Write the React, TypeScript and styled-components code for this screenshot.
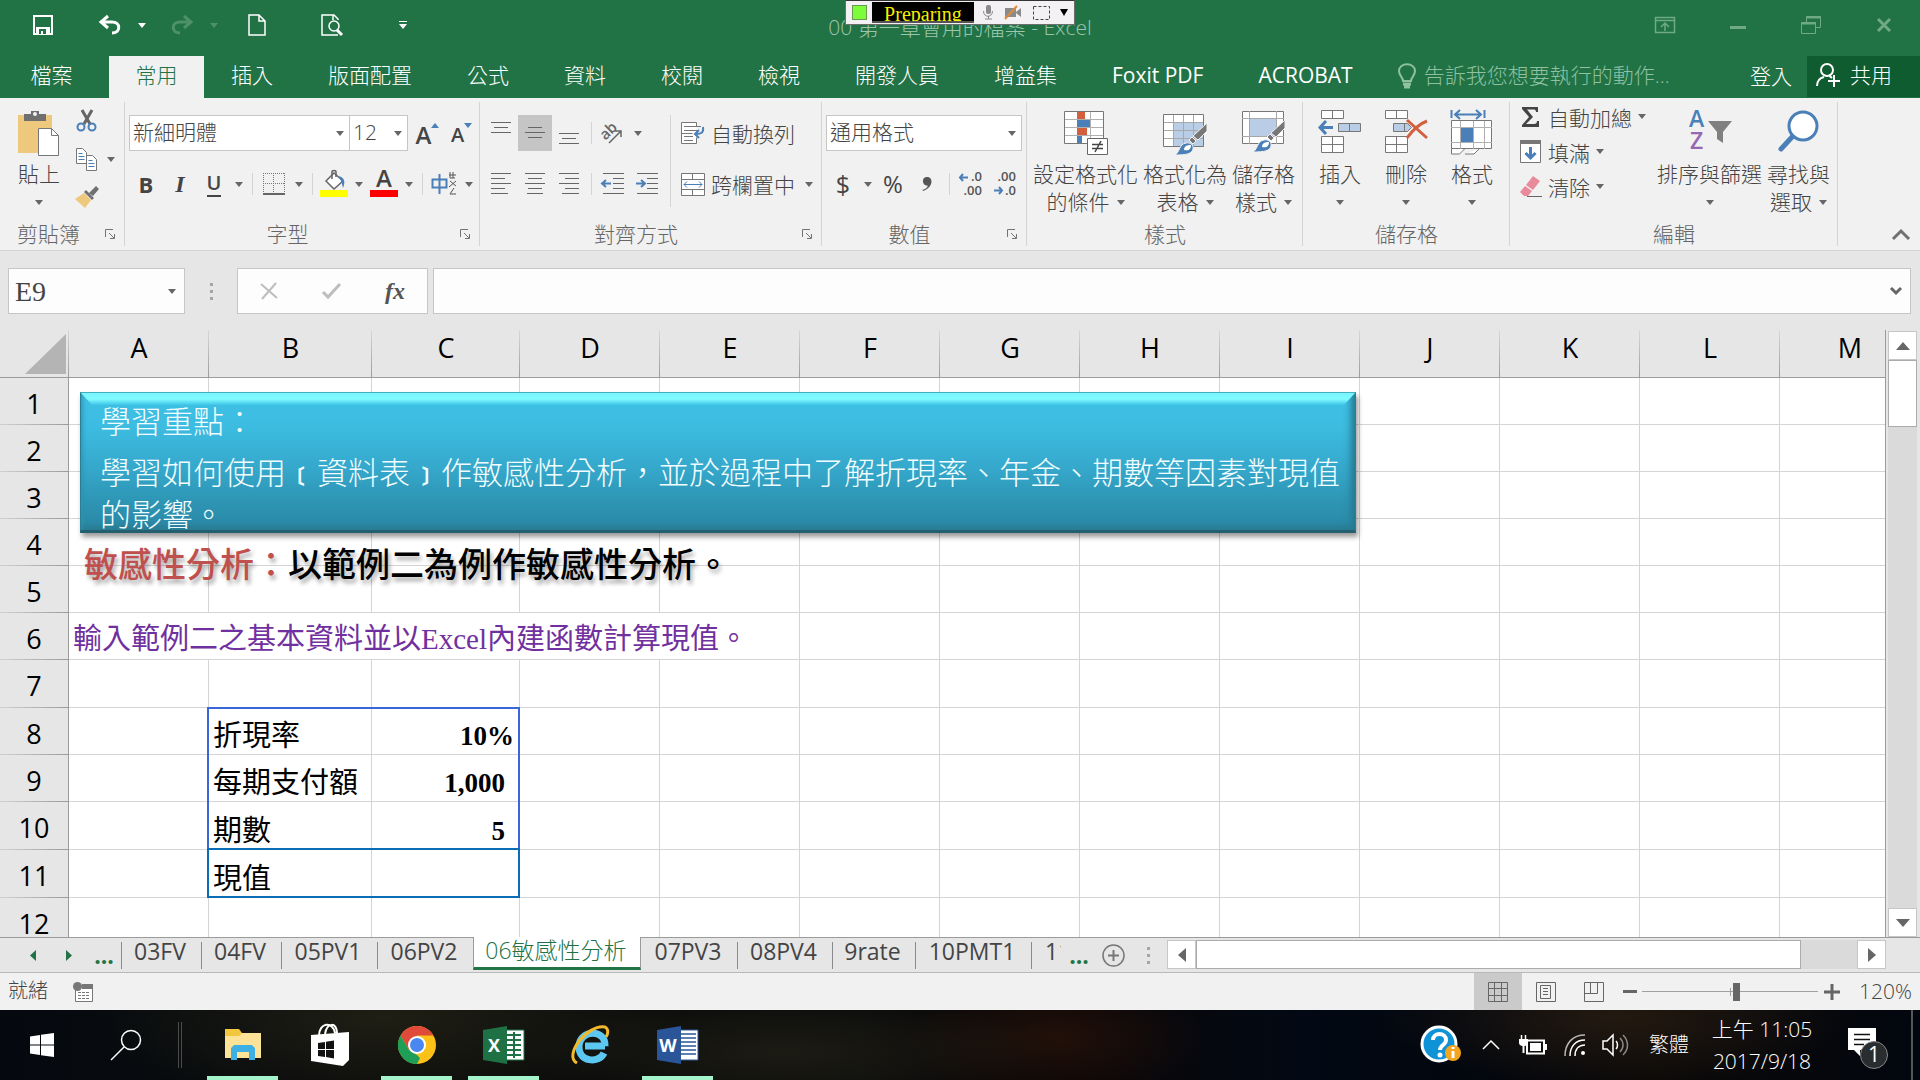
import React from "react";
import styled, { createGlobalStyle, css } from "styled-components";

const UI = `"Open Sans", "Noto Sans CJK TC", sans-serif`;
const SERIF = `"Liberation Serif", "Noto Sans CJK TC", serif`;

const c = {
  green: "#217346",
  greenDark: "#0e5c2f",
  greenSoft: "#9dc5ab",
  ribbon: "#f1f1f1",
  chrome: "#e6e6e6",
  line: "#d4d4d4",
  field: "#c6c6c6",
  text: "#444444",
  muted: "#666666",
  icon: "#737373",
  blue: "#4a7fb8",
  head: "#9b9b9b",
};

const Global = createGlobalStyle`
  * { box-sizing: border-box; }
  body { margin: 0; background: ${c.chrome}; font-family: ${UI}; font-weight: 300; }
  button, input, select { font: inherit; color: inherit; margin: 0; }
  button { border: 0; padding: 0; background: none; cursor: pointer; }
  svg { display: block; flex: none; overflow: visible; }
`;

const Shell = styled.div`
  display: flex;
  flex-direction: column;
  height: 100vh;
  overflow: hidden;
  color: ${c.text};
`;

/* ---------- shared ---------- */

const Tool = styled.button<{ $w?: number; $on?: boolean }>`
  display: flex;
  align-items: center;
  justify-content: center;
  flex: none;
  width: ${(p) => p.$w ?? 34}px;
  height: 36px;
  background: ${(p) => (p.$on ? "#c5c5c5" : "transparent")};
`;

const CaretSvg = ({ color = c.muted }: { color?: string }) => (
  <svg width="8" height="5" viewBox="0 0 8 5" aria-hidden="true">
    <path d="M0 0h8L4 5z" fill={color} />
  </svg>
);

const CaretButton = ({ label, color }: { label: string; color?: string }) => (
  <Tool $w={16} aria-label={label}>
    <CaretSvg color={color} />
  </Tool>
);

/* ---------- title bar ---------- */

const TitleBar = styled.header`
  display: grid;
  grid-template-columns: 1fr auto 1fr;
  height: 56px;
  flex: none;
  background: ${c.green};
  color: #fff;
`;

const Quick = styled.div`
  display: flex;
  align-items: center;
  height: 50px;
`;

const QuickPair = styled.div`
  display: flex;
  padding-right: 8px;
`;

const DocTitle = styled.h1`
  margin: 0;
  font-size: 21px;
  line-height: 54px;
  font-weight: 300;
  color: ${c.greenSoft};
  white-space: nowrap;
`;

const WindowButtons = styled.div`
  display: flex;
  justify-content: flex-end;
  align-items: center;
  height: 50px;
`;

const Recorder = styled.div`
  position: absolute;
  top: 0;
  left: 50%;
  margin-left: -115px;
  display: flex;
  align-items: center;
  width: 230px;
  height: 25px;
  padding: 0 6px;
  background: #f3f1f3;
  border: 1px solid #6d6d6d;
  border-top-color: #333;
`;

const RecLamp = styled.span`
  width: 15px;
  height: 15px;
  background: #7dfc3a;
  border: 1px solid #6a9a50;
`;

const RecState = styled.span`
  width: 102px;
  height: 21px;
  margin: 0 8px 0 5px;
  overflow: hidden;
  background: #000;
  border-bottom: 2px solid #555;
  color: #f4f000;
  font-family: ${SERIF};
  font-size: 20px;
  line-height: 24px;
  text-align: center;
`;

const RecTools = styled.span`
  display: flex;
  flex: 1;
  align-items: center;
  justify-content: space-between;
`;

/* ---------- ribbon tabs ---------- */

const TabRow = styled.nav`
  display: flex;
  height: 42px;
  flex: none;
  background: ${c.green};
  color: #fff;
  font-size: 21px;
  line-height: 36px;
`;

const RibbonTab = styled.button<{ $active?: boolean; $file?: boolean; $latin?: boolean }>`
  flex: none;
  padding: 0 28px 5px 27px;
  height: 42px;
  white-space: nowrap;
  font-weight: ${(p) => (p.$latin ? 400 : 300)};
  ${(p) => p.$file && css`width: 109px; padding: 0 26px 5px 20px;`}
  ${(p) => p.$active && css`
    width: 95px;
    padding: 0 0 5px;
    background: ${c.ribbon};
    color: ${c.green};
  `}
`;

const TellMe = styled.label`
  display: flex;
  align-items: flex-start;
  gap: 8px;
  flex: 1;
  min-width: 0;
  padding-left: 17px;
  color: #8fc0a0;
  & > svg { margin-top: 7px; }
`;

const TellMeInput = styled.input`
  width: 260px;
  height: 38px;
  padding: 0;
  border: 0;
  outline: 0;
  background: transparent;
  &::placeholder { color: #8fc0a0; opacity: 1; }
`;

const SignIn = styled.button`
  flex: none;
  width: 72px;
  height: 40px;
`;

const Share = styled.button`
  display: flex;
  align-items: center;
  gap: 10px;
  flex: none;
  width: 113px;
  height: 41px;
  padding: 0 9px 4px;
  background: ${c.greenDark};
`;

/* ---------- ribbon ---------- */

const Ribbon = styled.section`
  display: flex;
  flex: none;
  height: 153px;
  background: ${c.ribbon};
  border-bottom: 1px solid ${c.line};
  font-size: 21px;
`;

const Group = styled.div<{ $w: number }>`
  display: flex;
  flex-direction: column;
  flex: none;
  width: ${(p) => p.$w}px;
  background: linear-gradient(${c.line}, ${c.line}) right 0 top 4px / 1px 144px no-repeat;
`;

const GroupBody = styled.div<{ $pad: string; $gap?: number }>`
  display: flex;
  gap: ${(p) => p.$gap ?? 0}px;
  padding: ${(p) => p.$pad};
  height: 122px;
`;

const GroupFoot = styled.div<{ $lead?: boolean }>`
  display: flex;
  align-items: center;
  height: 28px;
  padding-left: ${(p) => (p.$lead ? 17 : 0)}px;
  color: ${c.muted};
  line-height: 28px;
  text-align: ${(p) => (p.$lead ? "left" : "center")};
`;

const FootName = styled.span`
  flex: 1;
  white-space: nowrap;
`;

const LauncherButton = styled.button`
  margin: 0 10px;
`;

const Rows = styled.div`
  display: flex;
  flex-direction: column;
  gap: 15px;
`;

const ToolRow = styled.div`
  display: flex;
  align-items: center;
  height: 36px;
`;

const ToolStack = styled.div`
  display: flex;
  flex-direction: column;
  padding-top: 4px;
  & > * { height: 38px; }
`;

const Divider = styled.span`
  width: 10px;
  height: 22px;
  background: linear-gradient(${c.line}, ${c.line}) center / 1px 100% no-repeat;
`;

const TallDivider = styled.span`
  width: 1px;
  height: 92px;
  margin: 0 10px 0 6px;
  background: ${c.line};
`;

const Combo = styled.span<{ $w: number }>`
  display: grid;
  grid-template-columns: 1fr;
  align-items: center;
  width: ${(p) => p.$w}px;
  height: 36px;
  background: #fff;
  border: 1px solid ${c.field};
  & > * { grid-area: 1 / 1; }
  & > svg { justify-self: end; margin-right: 5px; pointer-events: none; }
  & + & { margin-left: -1px; }
`;

const Select = styled.select`
  appearance: none;
  width: 100%;
  height: 34px;
  padding: 0 20px 2px 3px;
  border: 0;
  outline: 0;
  background: transparent;
  line-height: 30px;
`;

const Glyph = styled.span<{ $size?: number; $weight?: number; $italic?: boolean; $line?: boolean; $serif?: boolean }>`
  font-family: ${(p) => (p.$serif ? SERIF : UI)};
  font-size: ${(p) => p.$size ?? 22}px;
  font-weight: ${(p) => p.$weight ?? 400};
  font-style: ${(p) => (p.$italic ? "italic" : "normal")};
  line-height: 24px;
  border-bottom: ${(p) => (p.$line ? "2px solid #444" : "0")};
`;

const SizeTool = styled.button`
  display: flex;
  align-items: flex-start;
  justify-content: center;
  width: 34px;
  height: 36px;
  padding: 8px 0 0 5px;
`;

const InkTool = styled.button<{ $ink: string }>`
  display: flex;
  flex-direction: column;
  align-items: center;
  justify-content: flex-end;
  width: 34px;
  height: 36px;
  padding-bottom: 5px;
  &::after {
    content: "";
    width: 28px;
    height: 7px;
    background: ${(p) => p.$ink};
  }
`;

const Wide = styled.button`
  display: flex;
  align-items: center;
  gap: 6px;
  height: 36px;
  white-space: nowrap;
  & > svg:last-child:not(:first-child) { margin-left: 4px; }
`;

const Big = styled.button`
  display: flex;
  flex-direction: column;
  align-items: center;
  flex: none;
  min-width: 44px;
  line-height: 28px;
  white-space: nowrap;
`;

const BigIcon = styled.span`
  display: flex;
  height: 50px;
`;

const BigLine = styled.span`
  display: flex;
  align-items: center;
  justify-content: center;
  gap: 7px;
  height: 28px;
`;

const EditList = styled.div`
  display: flex;
  flex-direction: column;
  width: 137px;
  padding-top: 2px;
`;

const EditItem = styled.button`
  display: flex;
  align-items: center;
  height: 35px;
  gap: 6px;
  padding-bottom: 2px;
  white-space: nowrap;
`;

const Collapse = styled.button`
  display: flex;
  flex: 1;
  align-items: flex-end;
  justify-content: flex-end;
  padding: 0 10px 10px 0;
`;

const BigButton = ({ icon, a, b }: { icon: React.ReactNode; a: string; b?: string }) => (
  <Big>
    <BigIcon>{icon}</BigIcon>
    <BigLine>{a}</BigLine>
    <BigLine>
      {b}
      <CaretSvg />
    </BigLine>
  </Big>
);

const Launcher = ({ label }: { label: string }) => (
  <LauncherButton aria-label={label}>
    <svg width="10" height="10" viewBox="0 0 10 10" fill="none" stroke={c.icon}>
      <path d="M.5 8V.5H8M4 4l5 5M9.500 5v4.500H5" />
    </svg>
  </LauncherButton>
);

/* ---------- formula bar ---------- */

const FormulaBar = styled.section`
  display: flex;
  flex: none;
  height: 79px;
  padding: 17px 9px 16px 8px;
  background: ${c.chrome};
`;

const Field = styled.div<{ $w?: number }>`
  display: flex;
  align-items: center;
  flex: ${(p) => (p.$w ? "none" : "1")};
  width: ${(p) => (p.$w ? `${p.$w}px` : "auto")};
  height: 46px;
  padding-right: 8px;
  background: #fdfdfd;
  border: 1px solid ${c.field};
`;

const NameInput = styled.input`
  flex: 1;
  min-width: 0;
  height: 44px;
  padding: 2px 0 0 6px;
  border: 0;
  outline: 0;
  background: transparent;
  font-family: ${SERIF};
  font-size: 28px;
`;

const Dots = styled.span<{ $w: number; $h: number }>`
  display: flex;
  flex-direction: column;
  align-items: center;
  justify-content: center;
  gap: 4px;
  width: ${(p) => p.$w}px;
  height: ${(p) => p.$h}px;
  & > i { width: 3px; height: 3px; background: #a5a5a5; }
`;

const FxButtons = styled.div`
  display: flex;
  align-items: center;
  width: 191px;
  height: 46px;
  margin-right: 5px;
  background: #fdfdfd;
  border: 1px solid ${c.field};
`;

const FxGlyph = styled.span`
  font-family: ${SERIF};
  font-style: italic;
  font-weight: 700;
  font-size: 24px;
  color: #555;
`;

/* ---------- sheet ---------- */

const SheetArea = styled.main`
  display: flex;
  flex: 1;
  min-height: 0;
`;

const Viewport = styled.div`
  position: relative;
  flex: 1;
  min-width: 0;
  overflow: hidden;
  background: #fff;
  border-right: 1px solid ${c.head};
`;

const Grid = styled.table`
  table-layout: fixed;
  width: 1920px;
  border-collapse: separate;
  border-spacing: 0;
`;

const headLine = `linear-gradient(to bottom, #d8d8d8, ${c.head})`;

const Corner = styled.th`
  height: 48px;
  padding: 0 3px 3px 0;
  vertical-align: bottom;
  background: ${headLine} right / 1px 100% no-repeat ${c.chrome};
  border-bottom: 1px solid ${c.head};
  & > svg { margin-left: auto; }
`;

const ColHead = styled.th`
  height: 48px;
  padding: 0 0 11px;
  font-size: 27px;
  line-height: 36px;
  font-weight: 400;
  color: #000;
  background: ${headLine} right / 1px 100% no-repeat ${c.chrome};
  border-bottom: 1px solid ${c.head};
`;

const RowHead = styled.th<{ $h: number }>`
  height: ${(p) => p.$h}px;
  padding: 4px 0 0;
  font-size: 27px;
  line-height: 36px;
  font-weight: 400;
  color: #000;
  background: linear-gradient(to right, #d0d0d0, ${c.head}) bottom / 100% 1px no-repeat ${c.chrome};
  border-right: 1px solid ${c.head};
`;

const Cell = styled.td<{ $kind?: "note" | "label" | "percent" | "number" }>`
  padding: 0 0 0 4px;
  border-right: 1px solid ${c.line};
  border-bottom: 1px solid ${c.line};
  font-family: ${SERIF};
  font-size: 29px;
  line-height: 36px;
  font-weight: 400;
  color: #000;
  white-space: nowrap;
  vertical-align: bottom;
  ${(p) => p.$kind === "note" && css`color: #7030a0; padding-bottom: 2px;`}
  ${(p) => (p.$kind === "percent" || p.$kind === "number") && css`
    font-size: 27px;
    font-weight: 700;
    text-align: right;
    padding-right: ${p.$kind === "percent" ? 5 : 14}px;
  `}
`;

const CellFrame = styled.div<{ $top: number; $h: number; $color: string }>`
  position: absolute;
  left: 207px;
  top: ${(p) => p.$top}px;
  width: 313px;
  height: ${(p) => p.$h}px;
  border: 2px solid ${(p) => p.$color};
  pointer-events: none;
`;

const Banner = styled.div`
  position: absolute;
  left: 80px;
  top: 62px;
  width: 1276px;
  height: 141px;
  padding: 9px 0 0 19px;
  color: #f2fdff;
  font-family: ${SERIF};
  font-size: 31px;
  line-height: 42px;
  font-weight: 300;
  white-space: nowrap;
  background: linear-gradient(#3ec1e5 0, #3cbce0 25%, #35a8cb 55%, #2d93b2 82%, #2b88a6 100%);
  border: 1px solid #2a7f97;
  border-top-color: #45aebf;
  border-bottom: 3px solid #245f70;
  box-shadow: 2px 4px 5px rgba(0, 0, 0, 0.4), inset -8px 0 7px -4px #26798f, inset 4px 0 5px -3px #2f93b0,
    inset 0 -8px 7px -4px #2b7b91;
  &::before {
    content: "";
    position: absolute;
    inset: 0 0 auto;
    height: 12px;
    background: linear-gradient(#78f4ff 0, #80fbff 50%, #3ec4e8 100%);
    clip-path: polygon(0 0, 100% 0, calc(100% - 11px) 100%, 11px 100%);
  }
`;

const BannerLine = styled.p<{ $first?: boolean }>`
  position: relative;
  margin: 0 0 ${(p) => (p.$first ? 9 : 0)}px;
  & > b { font-weight: 700; }
`;

const Caption = styled.p`
  position: absolute;
  left: 84px;
  top: 213px;
  margin: 0;
  font-family: ${SERIF};
  font-size: 34px;
  line-height: 46px;
  font-weight: 500;
  color: #000;
  white-space: nowrap;
  text-shadow: 2px 4px 4px rgba(0, 0, 0, 0.35);
  & > em { font-style: normal; color: #c0504d; }
`;

const VScroll = styled.div`
  display: flex;
  flex-direction: column;
  width: 34px;
  padding: 1px 3px 0 2px;
  background: ${c.chrome};
`;

const ScrollButton = styled.button`
  display: flex;
  align-items: center;
  justify-content: center;
  flex: none;
  width: 29px;
  height: 29px;
  background: #fff;
  border: 1px solid ${c.field};
`;

const VTrack = styled.div`
  flex: 1;
  width: 29px;
  background: #dadada;
`;

const VThumb = styled.div`
  height: 67px;
  background: #fff;
  border: 1px solid #ababab;
`;

/* ---------- sheet tabs ---------- */

const SheetTabs = styled.nav`
  display: flex;
  flex: none;
  height: 35px;
  padding-left: 15px;
  background: ${c.chrome};
  border-top: 1px solid ${c.head};
  font-size: 23px;
`;

const TabNav = styled.button<{ $w: number }>`
  display: flex;
  align-items: center;
  justify-content: center;
  flex: none;
  width: ${(p) => p.$w}px;
  height: 34px;
  color: ${c.green};
  font-weight: 700;
`;

const SheetTab = styled.button<{ $w: number; $active?: boolean; $cut?: boolean }>`
  flex: none;
  width: ${(p) => p.$w}px;
  height: 32px;
  padding: 0 2px 6px 0;
  overflow: hidden;
  line-height: 26px;
  white-space: nowrap;
  font-weight: 400;
  background: linear-gradient(#8a8a8a, #8a8a8a) 0 4px / 1px 27px no-repeat;
  ${(p) => p.$cut && css`padding-left: 14px; text-align: left;`}
  ${(p) => p.$active && css`
    margin-top: -1px;
    height: 33px;
    padding-bottom: 4px;
    font-weight: 300;
    color: ${c.green};
    background: #fff;
    border: 1px solid ${c.head};
    border-top: 0;
    border-bottom: 3px solid ${c.green};
    & + button { background: none; }
  `}
`;

const HScroll = styled.div`
  display: flex;
  flex: 1;
  height: 29px;
  margin: 2px 34px 0 0;
  background: #dadada;
`;

const HThumb = styled.div`
  flex: 606;
  background: #fff;
  border: 1px solid #ababab;
`;

const HGap = styled.div`
  flex: 56;
`;

/* ---------- status bar ---------- */

const StatusBar = styled.footer`
  display: flex;
  align-items: center;
  flex: none;
  height: 38px;
  padding: 0 8px;
  background: ${c.ribbon};
  border-top: 1px solid #b9b9b9;
  font-size: 20px;
`;

const StatusText = styled.span`
  width: 65px;
  line-height: 34px;
  height: 36px;
`;

const StatusSpace = styled.span`
  flex: 1;
`;

const ViewButton = styled.button<{ $on?: boolean }>`
  display: flex;
  align-items: center;
  justify-content: center;
  width: 48px;
  height: 37px;
  background: ${(p) => (p.$on ? "#cacaca" : "none")};
`;

const ZoomButton = styled.button<{ $w: number }>`
  display: flex;
  align-items: center;
  justify-content: center;
  width: ${(p) => p.$w}px;
  height: 37px;
`;

const ZoomRange = styled.input`
  appearance: none;
  width: 176px;
  height: 18px;
  outline: 0;
  background: linear-gradient(#a0a0a0, #a0a0a0) center / 100% 1px no-repeat,
    linear-gradient(#a0a0a0, #a0a0a0) center / 1px 8px no-repeat;
  &::-webkit-slider-thumb {
    appearance: none;
    width: 7px;
    height: 18px;
    background: #666;
  }
`;

const ZoomValue = styled.button`
  width: 66px;
  height: 36px;
  padding-bottom: 2px;
  font-size: 21px;
  text-align: right;
  white-space: nowrap;
`;

/* ---------- taskbar ---------- */

const Taskbar = styled.footer`
  display: flex;
  flex: none;
  height: 70px;
  color: #fff;
  background: radial-gradient(ellipse 300px 90px at 20% 10%, rgba(60, 58, 34, 0.4), transparent),
    radial-gradient(ellipse 260px 60px at 41% 60%, rgba(50, 46, 28, 0.45), transparent),
    radial-gradient(ellipse 150px 60px at 55% 40%, rgba(56, 26, 12, 0.5), transparent),
    radial-gradient(ellipse 240px 70px at 84% 10%, rgba(60, 42, 24, 0.5), transparent),
    linear-gradient(90deg, #05090f 0, #0b0c0b 20%, #0a0b0c 45%, #0b0606 56%, #020914 68%, #02060e 76%, #0b0908 86%, #02060e 100%);
`;

const TaskButton = styled.button`
  display: flex;
  align-items: center;
  justify-content: center;
  flex: none;
  width: 84px;
  height: 70px;
`;

const TaskDivider = styled.span`
  width: 4px;
  height: 46px;
  margin: 12px 17px 0 10px;
  border: 1px solid #4b4b4b;
  border-width: 0 1px;
`;

const AppButton = styled.button<{ $open?: boolean }>`
  display: flex;
  align-items: center;
  justify-content: center;
  flex: none;
  width: 71px;
  height: 70px;
  margin: 0 8px;
  border-top: 4px solid transparent;
  border-bottom: 4px solid ${(p) => (p.$open ? "#a3f3cb" : "transparent")};
`;

const Tray = styled.div`
  display: flex;
  align-items: center;
  margin-left: auto;
`;

const TrayItem = styled.button<{ $w: number }>`
  display: flex;
  align-items: center;
  justify-content: center;
  flex: none;
  width: ${(p) => p.$w}px;
  height: 70px;
  font-size: 20px;
  line-height: 32px;
  white-space: nowrap;
`;

const Clock = styled(TrayItem)`
  flex-direction: column;
  font-size: 21px;
`;

const Notice = styled(TrayItem)`
  padding: 6px 0 0 4px;
`;

const ShowDesktop = styled.button`
  width: 9px;
  height: 70px;
  border-left: 2px solid #555;
`;

/* ---------- icons ---------- */

const g = "#777777";

const Lines = ({ rows, y = 0 }: { rows: [number, number][]; y?: number }) => (
  <svg width="20" height="22" viewBox="0 0 20 22" stroke="#666">
    {rows.map(([x1, x2], i) => (
      <path key={i} d={`M${x1} ${y + i * 5 + 0.5}H${x2}`} />
    ))}
  </svg>
);

const PasteIcon = () => (
  <svg width="42" height="46" viewBox="0 0 42 46">
    <path d="M0 5h34v38H0z" fill="#eec87c" />
    <path d="M6 4h7V1h8v3h7v7H6z" fill="#6f6f6f" />
    <circle cx="17" cy="4" r="2" fill="#f1f1f1" />
    <path d="M20.500 18.500h13l7 7v20h-20z" fill="#fff" stroke={g} />
    <path d="M33.500 18.500v7h7" fill="none" stroke={g} />
  </svg>
);

const ScissorsIcon = () => (
  <svg width="22" height="24" viewBox="0 0 22 24" fill="none">
    <path d="M6 1l8 14M16 1L8 15" stroke="#666" strokeWidth="3" />
    <circle cx="5" cy="18" r="3.500" stroke={c.blue} strokeWidth="2" />
    <circle cx="16" cy="18" r="3.500" stroke={c.blue} strokeWidth="2" />
  </svg>
);

const CopyIcon = () => (
  <svg width="22" height="23" viewBox="0 0 22 23" fill="#fff" stroke={g}>
    <path d="M.5.5h6l4 4v11H.5z" />
    <path d="M2.500 5.500h4M2.500 8.500h6M2.500 11.500h6" stroke={c.blue} />
    <path d="M10.500 7.500h6l4 4v11h-10z" />
    <path d="M12.500 12.500h4M12.500 15.500h6M12.500 18.500h6" stroke={c.blue} />
  </svg>
);

const BrushIcon = () => (
  <svg width="24" height="22" viewBox="0 0 24 22">
    <path d="M0 13l9-6 7 7-6 8z" fill="#eec87c" />
    <path d="M9 6l2-2 8 8-2 2zM14 7l7-7 3 3-6 7z" fill="#707070" />
  </svg>
);

const GrowMark = ({ down }: { down?: boolean }) => (
  <svg width="8" height="5" viewBox="0 0 8 5">
    <path d={down ? "M0 0h8L4 5z" : "M0 5h8L4 0z"} fill={c.blue} />
  </svg>
);

const BorderIcon = () => (
  <svg width="22" height="22" viewBox="0 0 22 22" stroke="#777" fill="none">
    <path d="M0 .5h22M0 10.500h22M.5 0v20M10.500 0v20M21.500 0v20" strokeDasharray="1 1" />
    <path d="M0 21h22" strokeWidth="2" stroke="#666" />
  </svg>
);

const BucketIcon = () => (
  <svg width="26" height="20" viewBox="0 0 26 20">
    <path d="M13 3l9 8-9 8-8-8z" fill="#fff" stroke="#666" strokeWidth="1.500" />
    <path d="M11 9V2c0-2 4-2 4 0v5" fill="none" stroke="#666" strokeWidth="1.500" />
    <path d="M17 6c6 1 8 5 5 12-1-4-1-7-5-12z" fill={c.blue} />
  </svg>
);

const PhoneticIcon = () => (
  <svg width="26" height="24" viewBox="0 0 26 24" fill="none">
    <path d="M1.500 7.500h14v8h-14zM8.500 2v20" stroke={c.blue} strokeWidth="2" />
    <path d="M19 0v6h5M22 0v6M18 3h7M19 9l6 5M25 9l-7 6M23 16l-4 6h6" stroke="#555" />
  </svg>
);

const AngleIcon = () => (
  <svg width="24" height="24" viewBox="0 0 24 24">
    <text x="0" y="15" fontFamily="Open Sans" fontSize="15" fontWeight="600" fill="#666" transform="rotate(-45 8 12)">
      ab
    </text>
    <path d="M8 22L20 10M20 16v-6h-6" stroke="#666" strokeWidth="1.500" fill="none" />
  </svg>
);

const WrapIcon = () => (
  <svg width="24" height="23" viewBox="0 0 24 23" fill="none" stroke={g}>
    <path d="M15.500 5V.5H.5v21h15v-6M.5 11.500h11" fill="#fff" />
    <path d="M3 4.500h17M3 8.500h14M3 14.500h9M3 18.500h9" />
    <path d="M22 5c1 6-2 7-7 7M18 8l-4 4 4 4" stroke={c.blue} strokeWidth="2" />
  </svg>
);

const MergeIcon = () => (
  <svg width="24" height="23" viewBox="0 0 24 23" fill="#fff" stroke={g}>
    <path d="M.5.5h23v22H.5zM.5 6.500h23M.5 16.500h23M11.500.5v6M11.500 16.500v6" />
    <path d="M3 11.500h18M6 8.500l-3 3 3 3M18 8.500l3 3-3 3" stroke={c.blue} fill="none" />
  </svg>
);

const IndentIcon = ({ right }: { right?: boolean }) => (
  <svg width="22" height="22" viewBox="0 0 22 22" fill="none">
    <path d="M1 .5h21M11 5.500h11M11 10.500h11M11 15.500h11M1 20.500h21" stroke="#666" />
    <path d={right ? "M0 10.500h8M5 7l4 3.500L5 14" : "M9 10.500H1M4 7l-4 3.500L4 14"} stroke={c.blue} strokeWidth="2" />
  </svg>
);

const DecimalIcon = ({ more }: { more?: boolean }) => (
  <svg width="24" height="24" viewBox="0 0 24 24" fontFamily="Open Sans" fontSize="13" fontWeight="600" fill="#555">
    <text x="23" y="9" textAnchor="end">{more ? ".0" : ".00"}</text>
    <text x="23" y="23" textAnchor="end">{more ? ".00" : ".0"}</text>
    <path
      d={more ? "M9 5.500H1M4 2L1 5.500 4 9" : "M1 18.500h8M6 15l3 3.500L6 22"}
      stroke={c.blue}
      strokeWidth="2"
      fill="none"
    />
  </svg>
);

const ConditionIcon = () => (
  <svg width="44" height="46" viewBox="0 0 44 46">
    <path d="M.5 1.500h39v32H.5z" fill="#fff" />
    <path d="M13.500 1v32M26.500 1v32M0 9.500h40M0 17.500h40M0 25.500h40" stroke="#b0b0b0" />
    <path d="M.5 1.500h39v32H.5z" fill="none" stroke={g} />
    <path d="M13 2h8v7h-8zM13 18h10v7H13z" fill="#d35f3d" />
    <path d="M13 10h13v7H13zM13 26h5v7h-5z" fill={c.blue} />
    <path d="M23.500 28.500h20v16h-20z" fill="#fff" stroke="#666" />
    <path d="M28 34.500h11M28 38.500h11M37 31l-6 11" stroke="#444" strokeWidth="1.500" />
  </svg>
);

const PaintBrush = ({ x, y }: { x: number; y: number }) => (
  <g transform={`translate(${x} ${y})`}>
    <path d="M32 0v8l-9 9-5-4zM21 18l-3 3-4-4 3-3z" fill="#777" stroke="#f1f1f1" />
    <path d="M0 32c5-3 4-11 11-12 4-1 8 2 7 6-1 5-7 6-18 6z" fill={c.blue} stroke="#f1f1f1" />
    <path d="M9 27c0-4 3-5 7-5 0 4-2 6-7 5z" fill="#fff" />
  </g>
);

const TableStyleIcon = () => (
  <svg width="44" height="46" viewBox="0 0 44 46">
    <path d="M.5 4.500h40v32H.5z" fill="#fff" />
    <path d="M10 13h31v24H10z" fill="#b9cee6" />
    <path d="M10.500 4v32M20.500 4v32M30.500 4v32M0 12.500h40M0 20.500h40M0 28.500h40" stroke="#a8a8a8" />
    <path d="M.5 4.500h40v32H.5z" fill="none" stroke={g} />
    <PaintBrush x={12} y={13} />
  </svg>
);

const CellStyleIcon = () => (
  <svg width="44" height="46" viewBox="0 0 44 46">
    <path d="M.5 1.500h41v32H.5z" fill="#fff" stroke={g} />
    <path d="M7.500 1v33M34.500 1v33M0 8.500h42M0 26.500h42" stroke="#a8a8a8" />
    <path d="M8 9h26v17H8z" fill="#b9cee6" />
    <PaintBrush x={11} y={10} />
  </svg>
);

const InsertIcon = () => (
  <svg width="44" height="46" viewBox="0 0 44 46" fill="#fff" stroke={g}>
    <path d="M3.500.5h22v8h-22zM14.500.5v8M3.500 26.500h22v16h-22zM14.500 26.500v16M3.500 34.500h22" />
    <path d="M20.500 13.500h22v8h-22zM31.500 13.500v8" fill="#b9cee6" />
    <path d="M15 17.500H2M8 11l-6 6.500L8 24" fill="none" stroke={c.blue} strokeWidth="3" />
  </svg>
);

const DeleteIcon = () => (
  <svg width="44" height="46" viewBox="0 0 44 46" fill="#fff" stroke={g}>
    <path d="M1.500.5h22v8h-22zM12.500.5v8M1.500 26.500h22v16h-22zM12.500 26.500v16M1.500 34.500h22" />
    <path d="M9.500 13.500h14l4 4-4 4h-14zM20.500 13.500v8" fill="#b9cee6" />
    <path d="M23 10l20 18M43 11c-8 3-15 10-20 17" fill="none" stroke="#d35f3d" strokeWidth="3" />
  </svg>
);

const FormatIcon = () => (
  <svg width="42" height="46" viewBox="0 0 42 46" fill="#fff" stroke={g}>
    <path d="M.5 0v8M33.500 0v8M4 4.500h26M9 0L4 4.500 9 9M25 0l5 4.500L25 9" fill="none" stroke={c.blue} strokeWidth="2" />
    <path d="M.5 10.500h40v28H.5z" />
    <path d="M9.500 11v28M22.500 11v28M33.500 11v28M0 17.500h41M0 32.500h41" stroke="#b0b0b0" />
    <path d="M10 18h12v14H10z" fill={c.blue} stroke="none" />
    <path d="M.5 39v5h8l5-5M14 44h9l5-5" />
  </svg>
);

const SigmaIcon = () => (
  <svg width="22" height="20" viewBox="0 0 22 20">
    <path d="M2 0h16v5h-2c0-2-1-2.500-3-2.500H7L13 10 6 17h8c2 0 3-1 3-3h2v6H2v-2l7-8-7-8z" fill="#444" />
  </svg>
);

const FillIcon = () => (
  <svg width="22" height="23" viewBox="0 0 22 23">
    <path d="M.5.5h20v22H.5z" fill="#fff" stroke={g} />
    <path d="M0 0h21v4H0z" fill={g} />
    <path d="M10.500 7v11M5.500 13l5 5 5-5" fill="none" stroke={c.blue} strokeWidth="3" />
  </svg>
);

const EraserIcon = () => (
  <svg width="22" height="21" viewBox="0 0 22 21">
    <path d="M13 0l7 5-7 9-7-5zM5 10l7 5-4 5H4l-4-4z" fill="#e88a9c" />
    <path d="M7 20.500h15" stroke="#666" />
  </svg>
);

const SortIcon = () => (
  <svg width="46" height="46" viewBox="0 0 46 46">
    <text x="2" y="17" fontFamily="Open Sans" fontSize="23" fontWeight="600" fill={c.blue}>A</text>
    <text x="3" y="39" fontFamily="Open Sans" fontSize="23" fontWeight="600" fill="#9668b4">Z</text>
    <path d="M21 11h24l-9 11v11l-6-4v-7z" fill="#808080" />
  </svg>
);

const FindIcon = () => (
  <svg width="42" height="46" viewBox="0 0 42 46">
    <path d="M15 26L3 39" stroke={c.blue} strokeWidth="5" strokeLinecap="round" />
    <circle cx="25" cy="16" r="14" fill="#fff" stroke={c.blue} strokeWidth="3" />
  </svg>
);

const OfficeLogo = ({ letter, color, sheet }: { letter: string; color: string; sheet: "grid" | "lines" }) => (
  <svg width="42" height="38" viewBox="0 0 42 38">
    <path d="M20 4h21v30H20z" fill="#fff" stroke={color} strokeWidth="1" />
    {sheet === "grid" ? (
      <path d="M24 9h14M24 14h14M24 19h14M24 24h14M24 29h14M31 6v26" stroke={color} strokeWidth="2" />
    ) : (
      <path d="M24 8h15M24 12h15M24 16h15M24 20h15M24 24h15M24 28h15" stroke={color} strokeWidth="1.500" />
    )}
    <path d="M0 4l24-4v38L0 34z" fill={color} />
    <text x="11" y="26" textAnchor="middle" fontFamily="Open Sans" fontSize="18" fontWeight="700" fill="#fff">
      {letter}
    </text>
  </svg>
);

/* ---------- data ---------- */

const ribbonTabs = ["插入", "版面配置", "公式", "資料", "校閱", "檢視", "開發人員", "增益集", "Foxit PDF", "ACROBAT"];

const columns: [string, number][] = [
  ["A", 140], ["B", 163], ["C", 148], ["D", 140], ["E", 140], ["F", 140], ["G", 140],
  ["H", 140], ["I", 140], ["J", 140], ["K", 140], ["L", 140], ["M", 140],
];

const rowHeights = [47, 47, 47, 47, 47, 47, 48, 47, 47, 48, 48, 47];

const labels: Record<number, [string, string, "percent" | "number"]> = {
  8: ["折現率", "10%", "percent"],
  9: ["每期支付額", "1,000", "number"],
  10: ["期數", "5", "number"],
  11: ["現值", "", "number"],
};

const sheetTabs: [string, number][] = [
  ["03FV", 80], ["04FV", 80], ["05PV1", 96], ["06PV2", 96], ["06敏感性分析", 168],
  ["07PV3", 96], ["08PV4", 95], ["9rate", 83], ["10PMT1", 116],
];

/* ---------- sections ---------- */

const Title = () => (
  <TitleBar>
    <Quick>
      <Tool $w={86} aria-label="儲存">
        <svg width="20" height="20" viewBox="0 0 20 20">
          <path d="M1 1h18v18H1z" fill="none" stroke="#fff" strokeWidth="2" />
          <path d="M3 12h14v7H3z" fill="#fff" />
          <path d="M6 14h7v5h-3v-3H8v3H6z" fill={c.green} />
        </svg>
      </Tool>
      <QuickPair>
        <Tool $w={48} aria-label="復原">
          <svg width="22" height="20" viewBox="0 0 22 20" fill="none" stroke="#fff" strokeWidth="3">
            <path d="M9 1L2 7l7 6M2 7h11c9 0 9 11 0 11" />
          </svg>
        </Tool>
        <CaretButton label="復原清單" color="#fff" />
      </QuickPair>
      <Tool $w={48} aria-label="取消復原">
        <svg width="22" height="20" viewBox="0 0 22 20" fill="none" stroke="#4d906a" strokeWidth="3">
          <path d="M13 1l7 6-7 6M20 7H9C0 7 0 18 9 18" />
        </svg>
      </Tool>
      <CaretButton label="取消復原清單" color="#4d906a" />
      <Tool $w={70} aria-label="新增">
        <svg width="18" height="22" viewBox="0 0 18 22" fill="none" stroke="#fff" strokeWidth="1.500">
          <path d="M1 1h10l6 6v14H1zM11 1v6h6" />
        </svg>
      </Tool>
      <Tool $w={80} aria-label="預覽列印">
        <svg width="22" height="22" viewBox="0 0 22 22" fill="none" stroke="#fff" strokeWidth="1.500">
          <path d="M17 6V5l-4-4H1v20h16M12 1v5" />
          <circle cx="13" cy="12" r="5" />
          <path d="M16 16l5 5" strokeWidth="3" />
        </svg>
      </Tool>
      <Tool $w={62} aria-label="自訂快速存取工具列">
        <svg width="8" height="8" viewBox="0 0 8 8" fill="#fff">
          <path d="M0 0h8v1H0zM0 3h8L4 8z" />
        </svg>
      </Tool>
    </Quick>
    <DocTitle>00 第一章會用的檔案 - Excel</DocTitle>
    <WindowButtons>
      <Tool $w={73} aria-label="功能區顯示選項">
        <svg width="20" height="16" viewBox="0 0 20 16" fill="none" stroke="#6fa985">
          <path d="M.5.5h19v15H.5zM.5 3.500h19M10 14V6M6 10l4-4 4 4" strokeWidth="1.500" />
        </svg>
      </Tool>
      <Tool $w={73} aria-label="最小化">
        <svg width="16" height="10" viewBox="0 0 16 10">
          <path d="M0 6h16v3H0z" fill="#6fa985" />
        </svg>
      </Tool>
      <Tool $w={73} aria-label="還原">
        <svg width="20" height="18" viewBox="0 0 20 18" fill="none" stroke="#6fa985">
          <path d="M.5 6.500h14v11H.5zM5.500 6V.5h14v11h-5" />
          <path d="M0 7.500h15M5 1.500h15" strokeWidth="2" />
        </svg>
      </Tool>
      <Tool $w={73} aria-label="關閉">
        <svg width="14" height="14" viewBox="0 0 14 14" stroke="#6fa985" strokeWidth="3">
          <path d="M1 1l12 12M13 1L1 13" />
        </svg>
      </Tool>
    </WindowButtons>
    <Recorder>
      <RecLamp />
      <RecState>Preparing</RecState>
      <RecTools>
        <svg width="12" height="15" viewBox="0 0 12 15" fill="#8a8a8a">
          <rect x="4" y="0" width="5" height="9" rx="2" />
          <path d="M1.500 6c0 7 9 7 9 0M6.500 11v3M3 14h7" fill="none" stroke="#8a8a8a" />
        </svg>
        <svg width="18" height="13" viewBox="0 0 18 13">
          <path d="M1 2h11v9H1zM12 6l5-4v9l-5-4z" fill="#8a8a8a" />
          <path d="M1 13L13 0" stroke="#e08a3c" strokeWidth="2" />
        </svg>
        <svg width="17" height="14" viewBox="0 0 17 14">
          <path d="M.5.5h16v13H.5z" fill="none" stroke="#444" strokeDasharray="3 2" />
        </svg>
        <svg width="8" height="7" viewBox="0 0 8 7">
          <path d="M0 0h8L4 7z" />
        </svg>
      </RecTools>
    </Recorder>
  </TitleBar>
);

const Tabs = () => (
  <TabRow>
    <RibbonTab $file>檔案</RibbonTab>
    <RibbonTab $active>常用</RibbonTab>
    {ribbonTabs.map((t) => (
      <RibbonTab key={t} $latin={/^[A-Z]/.test(t)}>{t}</RibbonTab>
    ))}
    <TellMe>
      <svg width="18" height="26" viewBox="0 0 18 26" fill="none" stroke="#8fc0a0" strokeWidth="2">
        <path d="M5 18c0-4-4-5-4-10 0-9 16-9 16 0 0 5-4 6-4 10z" />
        <path d="M5 21h8M6 24h6" strokeWidth="3" />
      </svg>
      <TellMeInput placeholder="告訴我您想要執行的動作..." aria-label="告訴我您想要執行的動作" />
    </TellMe>
    <SignIn>登入</SignIn>
    <Share>
      <svg width="24" height="24" viewBox="0 0 24 24" fill="none" stroke="#fff" strokeWidth="2">
        <ellipse cx="11" cy="7" rx="6" ry="6" />
        <path d="M1 23c0-5 3-8 7-9M13 13c1 0 2 1 3 2M12 18h12M18 12v12" />
      </svg>
      共用
    </Share>
  </TabRow>
);

const full: [number, number][] = [[0, 20], [0, 14], [0, 20], [0, 14], [0, 17]];

const RibbonBar = () => (
  <Ribbon>
    <Group $w={125}>
      <GroupBody $pad="0 0 0 17px" $gap={10}>
        <GroupBody $pad="12px 0 0">
          <BigButton icon={<PasteIcon />} a="貼上" />
        </GroupBody>
        <ToolStack>
          <Tool $w={32} aria-label="剪下"><ScissorsIcon /></Tool>
          <ToolRow>
            <Tool $w={32} aria-label="複製"><CopyIcon /></Tool>
            <CaretButton label="複製選項" />
          </ToolRow>
          <Tool $w={32} aria-label="複製格式"><BrushIcon /></Tool>
        </ToolStack>
      </GroupBody>
      <GroupFoot $lead><FootName>剪貼簿</FootName><Launcher label="剪貼簿設定" /></GroupFoot>
    </Group>

    <Group $w={355}>
      <GroupBody $pad="17px 0 0 4px">
        <Rows>
          <ToolRow>
            <Combo $w={221}>
              <Select aria-label="字型"><option>新細明體</option></Select>
              <CaretSvg />
            </Combo>
            <Combo $w={59}>
              <Select aria-label="字型大小"><option>12</option></Select>
              <CaretSvg />
            </Combo>
            <SizeTool aria-label="放大字型"><Glyph $size={24} $weight={600}>A</Glyph><GrowMark /></SizeTool>
            <SizeTool aria-label="縮小字型"><Glyph $size={20} $weight={600}>A</Glyph><GrowMark down /></SizeTool>
          </ToolRow>
          <ToolRow>
            <Tool aria-label="粗體"><Glyph $weight={700}>B</Glyph></Tool>
            <Tool aria-label="斜體"><Glyph $weight={700} $italic $serif $size={24}>I</Glyph></Tool>
            <Tool aria-label="底線"><Glyph $weight={600} $line $size={20}>U</Glyph></Tool>
            <CaretButton label="底線選項" />
            <Divider />
            <Tool aria-label="框線"><BorderIcon /></Tool>
            <CaretButton label="框線選項" />
            <Divider />
            <InkTool $ink="#ffff00" aria-label="填滿色彩"><BucketIcon /></InkTool>
            <CaretButton label="填滿色彩選項" />
            <InkTool $ink="#ff0000" aria-label="字型色彩"><Glyph $weight={600} $size={24}>A</Glyph></InkTool>
            <CaretButton label="字型色彩選項" />
            <Divider />
            <Tool aria-label="注音標示"><PhoneticIcon /></Tool>
            <CaretButton label="注音標示選項" />
          </ToolRow>
        </Rows>
      </GroupBody>
      <GroupFoot><FootName>字型</FootName><Launcher label="字型設定" /></GroupFoot>
    </Group>

    <Group $w={342}>
      <GroupBody $pad="17px 0 0 4px">
        <Rows>
          <ToolRow>
            <Tool aria-label="靠上對齊"><Lines rows={[[0, 20], [3, 17], [0, 20]]} /></Tool>
            <Tool $on aria-label="置中對齊"><Lines rows={[[3, 17], [0, 20], [3, 17]]} y={5} /></Tool>
            <Tool aria-label="靠下對齊"><Lines rows={[[0, 20], [3, 17], [0, 20]]} y={11} /></Tool>
            <Divider />
            <Tool aria-label="方向"><AngleIcon /></Tool>
            <CaretButton label="方向選項" />
          </ToolRow>
          <ToolRow>
            <Tool aria-label="靠左對齊"><Lines rows={full} /></Tool>
            <Tool aria-label="置中"><Lines rows={[[0, 20], [3, 17], [0, 20], [3, 17], [2, 18]]} /></Tool>
            <Tool aria-label="靠右對齊"><Lines rows={[[0, 20], [6, 20], [0, 20], [6, 20], [3, 20]]} /></Tool>
            <Divider />
            <Tool aria-label="減少縮排"><IndentIcon /></Tool>
            <Tool aria-label="增加縮排"><IndentIcon right /></Tool>
          </ToolRow>
        </Rows>
        <TallDivider />
        <Rows>
          <Wide><WrapIcon />自動換列</Wide>
          <Wide><MergeIcon />跨欄置中<CaretSvg /></Wide>
        </Rows>
      </GroupBody>
      <GroupFoot><FootName>對齊方式</FootName><Launcher label="對齊設定" /></GroupFoot>
    </Group>

    <Group $w={205}>
      <GroupBody $pad="17px 0 0 4px">
        <Rows>
          <Combo $w={196}>
            <Select aria-label="數值格式"><option>通用格式</option></Select>
            <CaretSvg />
          </Combo>
          <ToolRow>
            <Tool aria-label="會計格式"><Glyph $size={25}>$</Glyph></Tool>
            <CaretButton label="會計格式選項" />
            <Tool aria-label="百分比"><Glyph $size={24}>%</Glyph></Tool>
            <Tool aria-label="千分位">
              <svg width="10" height="14" viewBox="0 0 10 14">
                <path d="M5 0c7 0 6 11-4 14l-.5-1C4 12 6 10 5.500 8.500 0 9-1 0 5 0z" fill="#555" />
              </svg>
            </Tool>
            <Divider />
            <Tool aria-label="增加小數位數"><DecimalIcon more /></Tool>
            <Tool aria-label="減少小數位數"><DecimalIcon /></Tool>
          </ToolRow>
        </Rows>
      </GroupBody>
      <GroupFoot><FootName>數值</FootName><Launcher label="數值設定" /></GroupFoot>
    </Group>

    <Group $w={276}>
      <GroupBody $pad="12px 0 0 6px" $gap={5}>
        <BigButton icon={<ConditionIcon />} a="設定格式化" b="的條件" />
        <BigButton icon={<TableStyleIcon />} a="格式化為" b="表格" />
        <BigButton icon={<CellStyleIcon />} a="儲存格" b="樣式" />
      </GroupBody>
      <GroupFoot><FootName>樣式</FootName></GroupFoot>
    </Group>

    <Group $w={207}>
      <GroupBody $pad="12px 0 0 15px" $gap={22}>
        <BigButton icon={<InsertIcon />} a="插入" />
        <BigButton icon={<DeleteIcon />} a="刪除" />
        <BigButton icon={<FormatIcon />} a="格式" />
      </GroupBody>
      <GroupFoot><FootName>儲存格</FootName></GroupFoot>
    </Group>

    <Group $w={328}>
      <GroupBody $pad="0 0 0 10px">
        <EditList>
          <EditItem><SigmaIcon />自動加總<CaretSvg /></EditItem>
          <EditItem><FillIcon />填滿<CaretSvg /></EditItem>
          <EditItem><EraserIcon />清除<CaretSvg /></EditItem>
        </EditList>
        <GroupBody $pad="12px 0 0" $gap={5}>
          <BigButton icon={<SortIcon />} a="排序與篩選" />
          <BigButton icon={<FindIcon />} a="尋找與" b="選取" />
        </GroupBody>
      </GroupBody>
      <GroupFoot><FootName>編輯</FootName></GroupFoot>
    </Group>
    <Collapse aria-label="摺疊功能區">
      <svg width="18" height="11" viewBox="0 0 18 11" fill="none" stroke="#707070" strokeWidth="3">
        <path d="M1 10l8-8 8 8" />
      </svg>
    </Collapse>
  </Ribbon>
);

const Formula = () => (
  <FormulaBar>
    <Field $w={177}>
      <NameInput aria-label="名稱方塊" defaultValue="E9" />
      <CaretSvg />
    </Field>
    <Dots $w={52} $h={46}><i /><i /><i /></Dots>
    <FxButtons>
      <Tool $w={62} aria-label="取消">
        <svg width="18" height="16" viewBox="0 0 18 16" stroke="#bdbdbd" strokeWidth="2">
          <path d="M1 1l16 14M16 0L2 16" />
        </svg>
      </Tool>
      <Tool $w={64} aria-label="輸入">
        <svg width="20" height="16" viewBox="0 0 20 16" fill="none" stroke="#bdbdbd" strokeWidth="3">
          <path d="M1 9l5 5L18 1" />
        </svg>
      </Tool>
      <Tool $w={62} aria-label="插入函數"><FxGlyph>fx</FxGlyph></Tool>
    </FxButtons>
    <Field>
      <NameInput aria-label="資料編輯列" />
      <svg width="12" height="8" viewBox="0 0 12 8" fill="none" stroke="#666" strokeWidth="3">
        <path d="M1 1l5 5 5-5" />
      </svg>
    </Field>
  </FormulaBar>
);

const Sheet = () => (
  <SheetArea>
    <Viewport>
      <Grid>
        <colgroup>
          <col style={{ width: 69 }} />
          {columns.map(([n, w]) => <col key={n} style={{ width: w }} />)}
        </colgroup>
        <thead>
          <tr>
            <Corner aria-label="全選">
              <svg width="41" height="40" viewBox="0 0 41 40"><path d="M41 0v40H0z" fill="#b4b4b4" /></svg>
            </Corner>
            {columns.map(([n]) => <ColHead key={n} scope="col">{n}</ColHead>)}
          </tr>
        </thead>
        <tbody>
          {rowHeights.map((h, i) => {
            const row = i + 1;
            const data = labels[row];
            return (
              <tr key={row}>
                <RowHead $h={h} scope="row">{row}</RowHead>
                {row === 6 && <Cell $kind="note" colSpan={5}>輸入範例二之基本資料並以Excel內建函數計算現值。</Cell>}
                {columns.slice(row === 6 ? 5 : 0).map(([n]) => {
                  if (data && n === "B") return <Cell key={n} $kind="label">{data[0]}</Cell>;
                  if (data && n === "C") return <Cell key={n} $kind={data[2]}>{data[1]}</Cell>;
                  return <Cell key={n} />;
                })}
              </tr>
            );
          })}
        </tbody>
      </Grid>
      <CellFrame $top={377} $h={143} $color="#3a66d8" />
      <CellFrame $top={518} $h={50} $color="#0b6db5" />
      <Banner>
        <BannerLine $first>學習重點：</BannerLine>
        <BannerLine>
          學習如何使用<b>﹝</b>資料表<b>﹞</b>作敏感性分析，並於過程中了解折現率、年金、期數等因素對現值
          <br />
          的影響。
        </BannerLine>
      </Banner>
      <Caption><em>敏感性分析：</em>以範例二為例作敏感性分析。</Caption>
    </Viewport>
    <VScroll>
      <ScrollButton aria-label="向上捲動">
        <svg width="14" height="8" viewBox="0 0 14 8"><path d="M0 8h14L7 0z" fill="#666" /></svg>
      </ScrollButton>
      <VTrack><VThumb /></VTrack>
      <ScrollButton aria-label="向下捲動">
        <svg width="14" height="8" viewBox="0 0 14 8"><path d="M0 0h14L7 8z" fill="#666" /></svg>
      </ScrollButton>
    </VScroll>
  </SheetArea>
);

const SheetBar = () => (
  <SheetTabs>
    <TabNav $w={36} aria-label="上一張工作表">
      <svg width="6" height="11" viewBox="0 0 6 11"><path d="M6 0v11L0 5.500z" fill={c.green} /></svg>
    </TabNav>
    <TabNav $w={36} aria-label="下一張工作表">
      <svg width="6" height="11" viewBox="0 0 6 11"><path d="M0 0v11l6-5.500z" fill={c.green} /></svg>
    </TabNav>
    <TabNav $w={34}>...</TabNav>
    {sheetTabs.map(([n, w]) => <SheetTab key={n} $w={w} $active={n === "06敏感性分析"}>{n}</SheetTab>)}
    <SheetTab $w={30} $cut>11</SheetTab>
    <TabNav $w={36}>...</TabNav>
    <TabNav $w={32} aria-label="新增工作表">
      <svg width="23" height="23" viewBox="0 0 23 23" fill="none" stroke="#777">
        <circle cx="11.500" cy="11.500" r="10.500" strokeWidth="1.500" />
        <path d="M11.500 6v11M6 11.500h11" strokeWidth="2" />
      </svg>
    </TabNav>
    <Dots $w={38} $h={34}><i /><i /><i /></Dots>
    <HScroll>
      <ScrollButton aria-label="向左捲動">
        <svg width="8" height="14" viewBox="0 0 8 14"><path d="M8 0v14L0 7z" fill="#666" /></svg>
      </ScrollButton>
      <HThumb />
      <HGap />
      <ScrollButton aria-label="向右捲動">
        <svg width="8" height="14" viewBox="0 0 8 14"><path d="M0 0v14l8-7z" fill="#666" /></svg>
      </ScrollButton>
    </HScroll>
  </SheetTabs>
);

const Status = () => (
  <StatusBar>
    <StatusText>就緒</StatusText>
    <svg width="20" height="20" viewBox="0 0 20 20">
      <path d="M2.500 3.500h17v16h-17z" fill="#fff" stroke="#777" />
      <path d="M9 2h11v5H9z" fill="#777" />
      <circle cx="4.500" cy="4.500" r="4.500" fill="#777" />
      <path d="M5 10.500h12M5 13.500h12M5 16.500h12" stroke="#777" strokeDasharray="3 1" />
    </svg>
    <StatusSpace />
    <ViewButton $on aria-label="標準模式">
      <svg width="20" height="20" viewBox="0 0 20 20" fill="none" stroke="#666">
        <path d="M.5.5h19v19H.5zM6.500.5v19M13.500.5v19M.5 6.500h19M.5 13.500h19" />
      </svg>
    </ViewButton>
    <ViewButton aria-label="整頁模式">
      <svg width="20" height="20" viewBox="0 0 20 20" fill="none" stroke="#666">
        <path d="M.5.5h19v19H.5zM4.500 3.500h10v13h-10zM7 6.500h5M7 9.500h5M7 12.500h5" />
      </svg>
    </ViewButton>
    <ViewButton aria-label="分頁預覽">
      <svg width="20" height="20" viewBox="0 0 20 20" fill="none" stroke="#666">
        <path d="M.5.5h19v19H.5zM.5 11.500h13M6.500.5v11M13.500.5v11" />
      </svg>
    </ViewButton>
    <ZoomButton $w={24} aria-label="縮小">
      <svg width="14" height="4" viewBox="0 0 14 4"><path d="M0 0h14v3H0z" fill="#666" /></svg>
    </ZoomButton>
    <ZoomRange type="range" min={0} max={100} defaultValue={54} aria-label="縮放" />
    <ZoomButton $w={28} aria-label="放大">
      <svg width="16" height="16" viewBox="0 0 16 16"><path d="M0 6.500h16v3H0zM6.500 0h3v16h-3z" fill="#666" /></svg>
    </ZoomButton>
    <ZoomValue>120%</ZoomValue>
  </StatusBar>
);

const Task = () => (
  <Taskbar>
    <TaskButton aria-label="開始">
      <svg width="24" height="24" viewBox="0 0 24 24" fill="#fff">
        <path d="M0 3.500l10-1.500v9.500H0zM11 1.800L24 0v11.500H11zM0 12.500h10V22L0 20.500zM11 12.500h13V24l-13-1.800z" />
      </svg>
    </TaskButton>
    <TaskButton aria-label="搜尋">
      <svg width="30" height="30" viewBox="0 0 30 30" fill="none" stroke="#fff" strokeWidth="1.500">
        <circle cx="20" cy="10" r="9.500" />
        <path d="M13 17L0 30" />
      </svg>
    </TaskButton>
    <TaskDivider />
    <AppButton $open aria-label="檔案總管">
      <svg width="38" height="32" viewBox="0 0 38 32">
        <path d="M1 0h14l3 4h19v24H1z" fill="#f2c63d" />
        <path d="M18 4h19v25H1V7h14z" fill="#fde397" />
        <path d="M10 16h18l3 3v12h-6v-8H13v8H7V19z" fill="#3fb0e4" />
      </svg>
    </AppButton>
    <AppButton aria-label="市集">
      <svg width="38" height="42" viewBox="0 0 38 42">
        <path d="M8 12c0-14 14-15 16-3M14 10c2-12 12-12 12-1" fill="none" stroke="#fff" strokeWidth="2" />
        <path d="M0 11l38-3v28l-6 6L0 37z" fill="#fff" />
        <path d="M7 19l7-1v7H7zM15 17.800l8-1.300V25h-8zM7 26h7v7l-7-1zM15 26h8v8.500L15 33z" fill="#111" />
      </svg>
    </AppButton>
    <AppButton $open aria-label="Chrome">
      <svg width="38" height="38" viewBox="0 0 38 38">
        <circle cx="19" cy="19" r="19" fill="#fbc116" />
        <path d="M19 19L2.500 9.500A19 19 0 0 1 35.500 9.500H19z" fill="#e04a3a" />
        <path d="M2.500 9.500L11 24l8-5V9.500z" fill="#e04a3a" />
        <path d="M2.500 9.500L11 24l8 5 3 3-3 6A19 19 0 0 1 2.500 9.500z" fill="#1f9e58" />
        <circle cx="19" cy="19" r="9" fill="#fff" />
        <circle cx="19" cy="19" r="7" fill="#4a87f0" />
      </svg>
    </AppButton>
    <AppButton $open aria-label="Excel"><OfficeLogo letter="X" color="#1e7145" sheet="grid" /></AppButton>
    <AppButton aria-label="Internet Explorer">
      <svg width="40" height="38" viewBox="0 0 40 38" fill="none">
        <path d="M34 20H14M34 20c1-17-25-17-26 0-1 16 20 18 25 7" stroke="#5cc8f2" strokeWidth="7" />
        <path d="M6 37C-8 30 16-2 34 1c4 2 3 7 1 10" stroke="#f2b92c" strokeWidth="3" />
      </svg>
    </AppButton>
    <AppButton $open aria-label="Word"><OfficeLogo letter="W" color="#2a5699" sheet="lines" /></AppButton>
    <Tray>
      <TrayItem $w={60} aria-label="說明">
        <svg width="40" height="38" viewBox="0 0 40 38">
          <circle cx="18" cy="18" r="17" fill="#0f92d6" stroke="#fff" strokeWidth="3" />
          <path d="M12 14c0-8 13-8 13 0 0 5-6 5-6 10" fill="none" stroke="#fff" strokeWidth="4" />
          <circle cx="19" cy="29" r="2.500" fill="#fff" />
          <circle cx="32" cy="27" r="8" fill="#f2a51f" />
          <path d="M32 25v7M32 21v2" stroke="#fff" strokeWidth="3" />
        </svg>
      </TrayItem>
      <TrayItem $w={40} aria-label="顯示隱藏的圖示">
        <svg width="18" height="10" viewBox="0 0 18 10" fill="none" stroke="#fff" strokeWidth="1.500">
          <path d="M1 9l8-8 8 8" />
        </svg>
      </TrayItem>
      <TrayItem $w={44} aria-label="電池">
        <svg width="28" height="20" viewBox="0 0 28 20">
          <path d="M8 5.500h17v13H8z" fill="none" stroke="#fff" strokeWidth="2" />
          <path d="M11 8h11v8H11zM26 9h2v6h-2z" fill="#fff" />
          <path d="M0 4h9v4c0 2-2 3-3.500 3v7h-2v-7C2 11 0 10 0 8z" fill="#fff" />
          <path d="M2.500 0v4M6.500 0v4" stroke="#fff" strokeWidth="1.500" />
        </svg>
      </TrayItem>
      <TrayItem $w={40} aria-label="網路">
        <svg width="22" height="22" viewBox="0 0 22 22" fill="none" stroke="#fff" strokeWidth="1.500">
          <path d="M1 22C1 9 9 1 21 1" opacity=".7" />
          <path d="M6 22C6 12 12 6 21 6M11 22c0-7 4-11 10-11" />
          <circle cx="19" cy="19" r="2" fill="#fff" stroke="none" />
        </svg>
      </TrayItem>
      <TrayItem $w={40} aria-label="音量">
        <svg width="26" height="22" viewBox="0 0 26 22" fill="none" stroke="#fff" strokeWidth="1.500">
          <path d="M1 7h4l6-6v20l-6-6H1zM14 7c2 2 2 6 0 8" />
          <path d="M18 4c4 4 4 10 0 14M21 1c6 6 6 14 0 20" opacity=".5" />
        </svg>
      </TrayItem>
      <TrayItem $w={68}>繁體</TrayItem>
      <Clock $w={118}>
        <span>上午 11:05</span>
        <span>2017/9/18</span>
      </Clock>
      <Notice $w={90} aria-label="通知">
        <svg width="42" height="42" viewBox="0 0 42 42">
          <path d="M1 1h28v22H13v6l-6-6H1z" fill="#fff" />
          <path d="M7 7.500h16M7 12.500h16M7 17.500h10" stroke="#111" strokeWidth="1.500" />
          <circle cx="27" cy="28" r="13.500" fill="#2a2d30" stroke="#888" />
          <text x="27" y="35" textAnchor="middle" fontFamily="Open Sans" fontSize="21" fontWeight="400" fill="#fff">1</text>
        </svg>
      </Notice>
      <ShowDesktop aria-label="顯示桌面" />
    </Tray>
  </Taskbar>
);

export default function App() {
  return (
    <Shell>
      <Global />
      <Title />
      <Tabs />
      <RibbonBar />
      <Formula />
      <Sheet />
      <SheetBar />
      <Status />
      <Task />
    </Shell>
  );
}
